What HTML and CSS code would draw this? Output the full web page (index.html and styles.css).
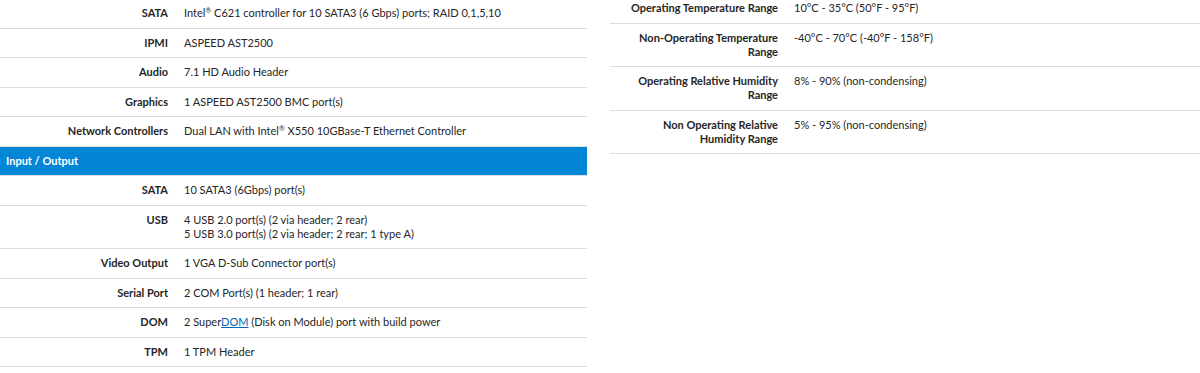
FILE: index.html
```html
<!DOCTYPE html>
<html lang="en">
<head>
    <meta charset="UTF-8">
    <title>Specifications</title>
    <link rel="stylesheet" href="styles.css">
</head>
<body>
    <div class="specs">
        <table class="spec-table left">
            <tbody>
                <tr><th>SATA</th><td>Intel<sup>®</sup> C621 controller for 10 SATA3 (6 Gbps) ports; RAID 0,1,5,10</td></tr>
                <tr><th>IPMI</th><td>ASPEED AST2500</td></tr>
                <tr><th>Audio</th><td>7.1 HD Audio Header</td></tr>
                <tr><th>Graphics</th><td>1 ASPEED AST2500 BMC port(s)</td></tr>
                <tr><th>Network Controllers</th><td>Dual LAN with Intel<sup>®</sup> X550 10GBase-T Ethernet Controller</td></tr>
                <tr class="group"><th colspan="2">Input / Output</th></tr>
                <tr><th>SATA</th><td>10 SATA3 (6Gbps) port(s)</td></tr>
                <tr><th>USB</th><td>4 USB 2.0 port(s) (2 via header; 2 rear)<br>5 USB 3.0 port(s) (2 via header; 2 rear; 1 type A)</td></tr>
                <tr><th>Video Output</th><td>1 VGA D-Sub Connector port(s)</td></tr>
                <tr><th>Serial Port</th><td>2 COM Port(s) (1 header; 1 rear)</td></tr>
                <tr><th>DOM</th><td>2 Super<a href="#">DOM</a> (Disk on Module) port with build power</td></tr>
                <tr><th>TPM</th><td>1 TPM Header</td></tr>
            </tbody>
        </table>
        <table class="spec-table right">
            <tbody>
                <tr><th>Operating Temperature Range</th><td>10°C - 35°C (50°F - 95°F)</td></tr>
                <tr><th>Non-Operating Temperature Range</th><td>-40°C - 70°C (-40°F - 158°F)</td></tr>
                <tr><th>Operating Relative Humidity Range</th><td>8% - 90% (non-condensing)</td></tr>
                <tr><th>Non Operating Relative Humidity Range</th><td>5% - 95% (non-condensing)</td></tr>
            </tbody>
        </table>
    </div>
</body>
</html>
```
FILE: styles.css
```css
body {
    font-family: 'Lato', 'Liberation Sans', sans-serif;
    font-size: 11px;
    color: #262626;
    background: #fff;
    margin: 0;
    padding: 0;
}
.specs {
    display: flex;
    align-items: flex-start;
    gap: 23px;
}
.spec-table {
    border-collapse: collapse;
    table-layout: fixed;
}
.spec-table.left { width: 587px; margin-top: -1px; }
.spec-table.right { width: 590px; margin-top: -6px; }
.spec-table th,
.spec-table td {
    padding: 7.25px 8px;
    line-height: 14px;
    vertical-align: top;
    border-bottom: 1px solid #dcdcdc;
    text-align: left;
}
.spec-table th {
    width: 160px;
    text-align: right;
    font-weight: bold;
}
.spec-table sup {
    font-size: 7px;
    line-height: 0;
    vertical-align: 4px;
}
.spec-table tr.group th {
    background: #0386d6;
    color: #fff;
    text-align: left;
    padding-left: 6px;
}
.spec-table a {
    color: #0068b5;
}
```
